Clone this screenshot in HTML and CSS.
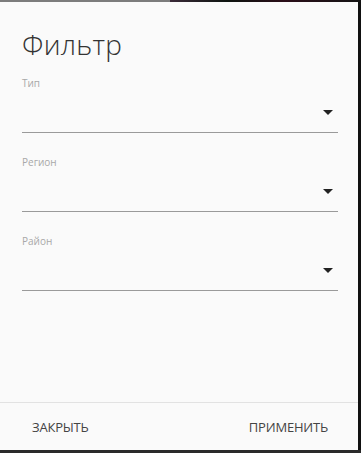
FILE: index.html
```html
<!DOCTYPE html>
<html lang="ru">
<head>
<meta charset="utf-8">
<link rel="stylesheet" href="styles.css">
</head>
<body>
<div class="backdrop">
  <div class="strip"><span class="strip-grey"></span><span class="strip-dark"></span></div>
  <div class="row">
    <div class="dialog">
      <div class="content">
        <h1 class="title">Фильтр</h1>
        <div class="field">
          <div class="label">Тип</div>
          <div class="select"><svg class="arrow" width="10" height="5" viewBox="0 0 10 5"><path d="M0 0h10L5 5z" fill="#222"/></svg></div>
        </div>
        <div class="field">
          <div class="label">Регион</div>
          <div class="select"><svg class="arrow" width="10" height="5" viewBox="0 0 10 5"><path d="M0 0h10L5 5z" fill="#222"/></svg></div>
        </div>
        <div class="field">
          <div class="label">Район</div>
          <div class="select"><svg class="arrow" width="10" height="5" viewBox="0 0 10 5"><path d="M0 0h10L5 5z" fill="#222"/></svg></div>
        </div>
      </div>
      <div class="footer">
        <button class="btn">ЗАКРЫТЬ</button>
        <button class="btn">ПРИМЕНИТЬ</button>
      </div>
    </div>
    <div class="side"></div>
  </div>
</div>
</body>
</html>
```
FILE: styles.css
```css
html, body {
  margin: 0;
  padding: 0;
  width: 361px;
  height: 453px;
  overflow: hidden;
  background: #2a2a2a;
  font-family: "Open Sans", "Noto Sans", sans-serif;
}
.backdrop {
  display: flex;
  flex-direction: column;
  height: 453px;
}
.strip {
  display: flex;
  height: 2px;
}
.strip-grey {
  width: 170px;
  background: #7c7c7c;
}
.strip-dark {
  flex: 1;
  background: linear-gradient(90deg, #3a2a38, #0e1410 30%, #2a0d18 60%, #141414);
}
.row {
  display: flex;
  height: 448px;
}
.dialog {
  width: 358px;
  background: #fafafa;
  display: flex;
  flex-direction: column;
}
.side {
  flex: 1;
  background: #111;
}
.content {
  flex: 1;
  padding: 0 20px 0 22px;
}
.title {
  margin: 22px 0 0;
  font-size: 28px;
  font-weight: 300;
  color: #333;
  line-height: 40px;
  letter-spacing: 0.3px;
}
.field:first-of-type {
  margin-top: 12px;
}
.label {
  font-size: 10px;
  color: #a8a8a8;
  line-height: 14px;
  height: 16px;
}
.select {
  height: 41px;
  border-bottom: 1px solid #9a9a9a;
  display: flex;
  align-items: flex-start;
  justify-content: flex-end;
  padding-top: 18px;
  box-sizing: border-box;
  margin-bottom: 22px;
}
.arrow {
  display: block;
  margin-right: 5px;
}
.footer {
  height: 47px;
  border-top: 1px solid #e2e2e2;
  display: flex;
  justify-content: space-between;
  align-items: center;
  padding: 0 22px 0 24px;
}
.btn {
  border: 0;
  background: none;
  padding: 4px 8px;
  font-family: "Open Sans", "Noto Sans", sans-serif;
  font-size: 13px;
  color: #444;
  letter-spacing: -0.2px;
}
```
